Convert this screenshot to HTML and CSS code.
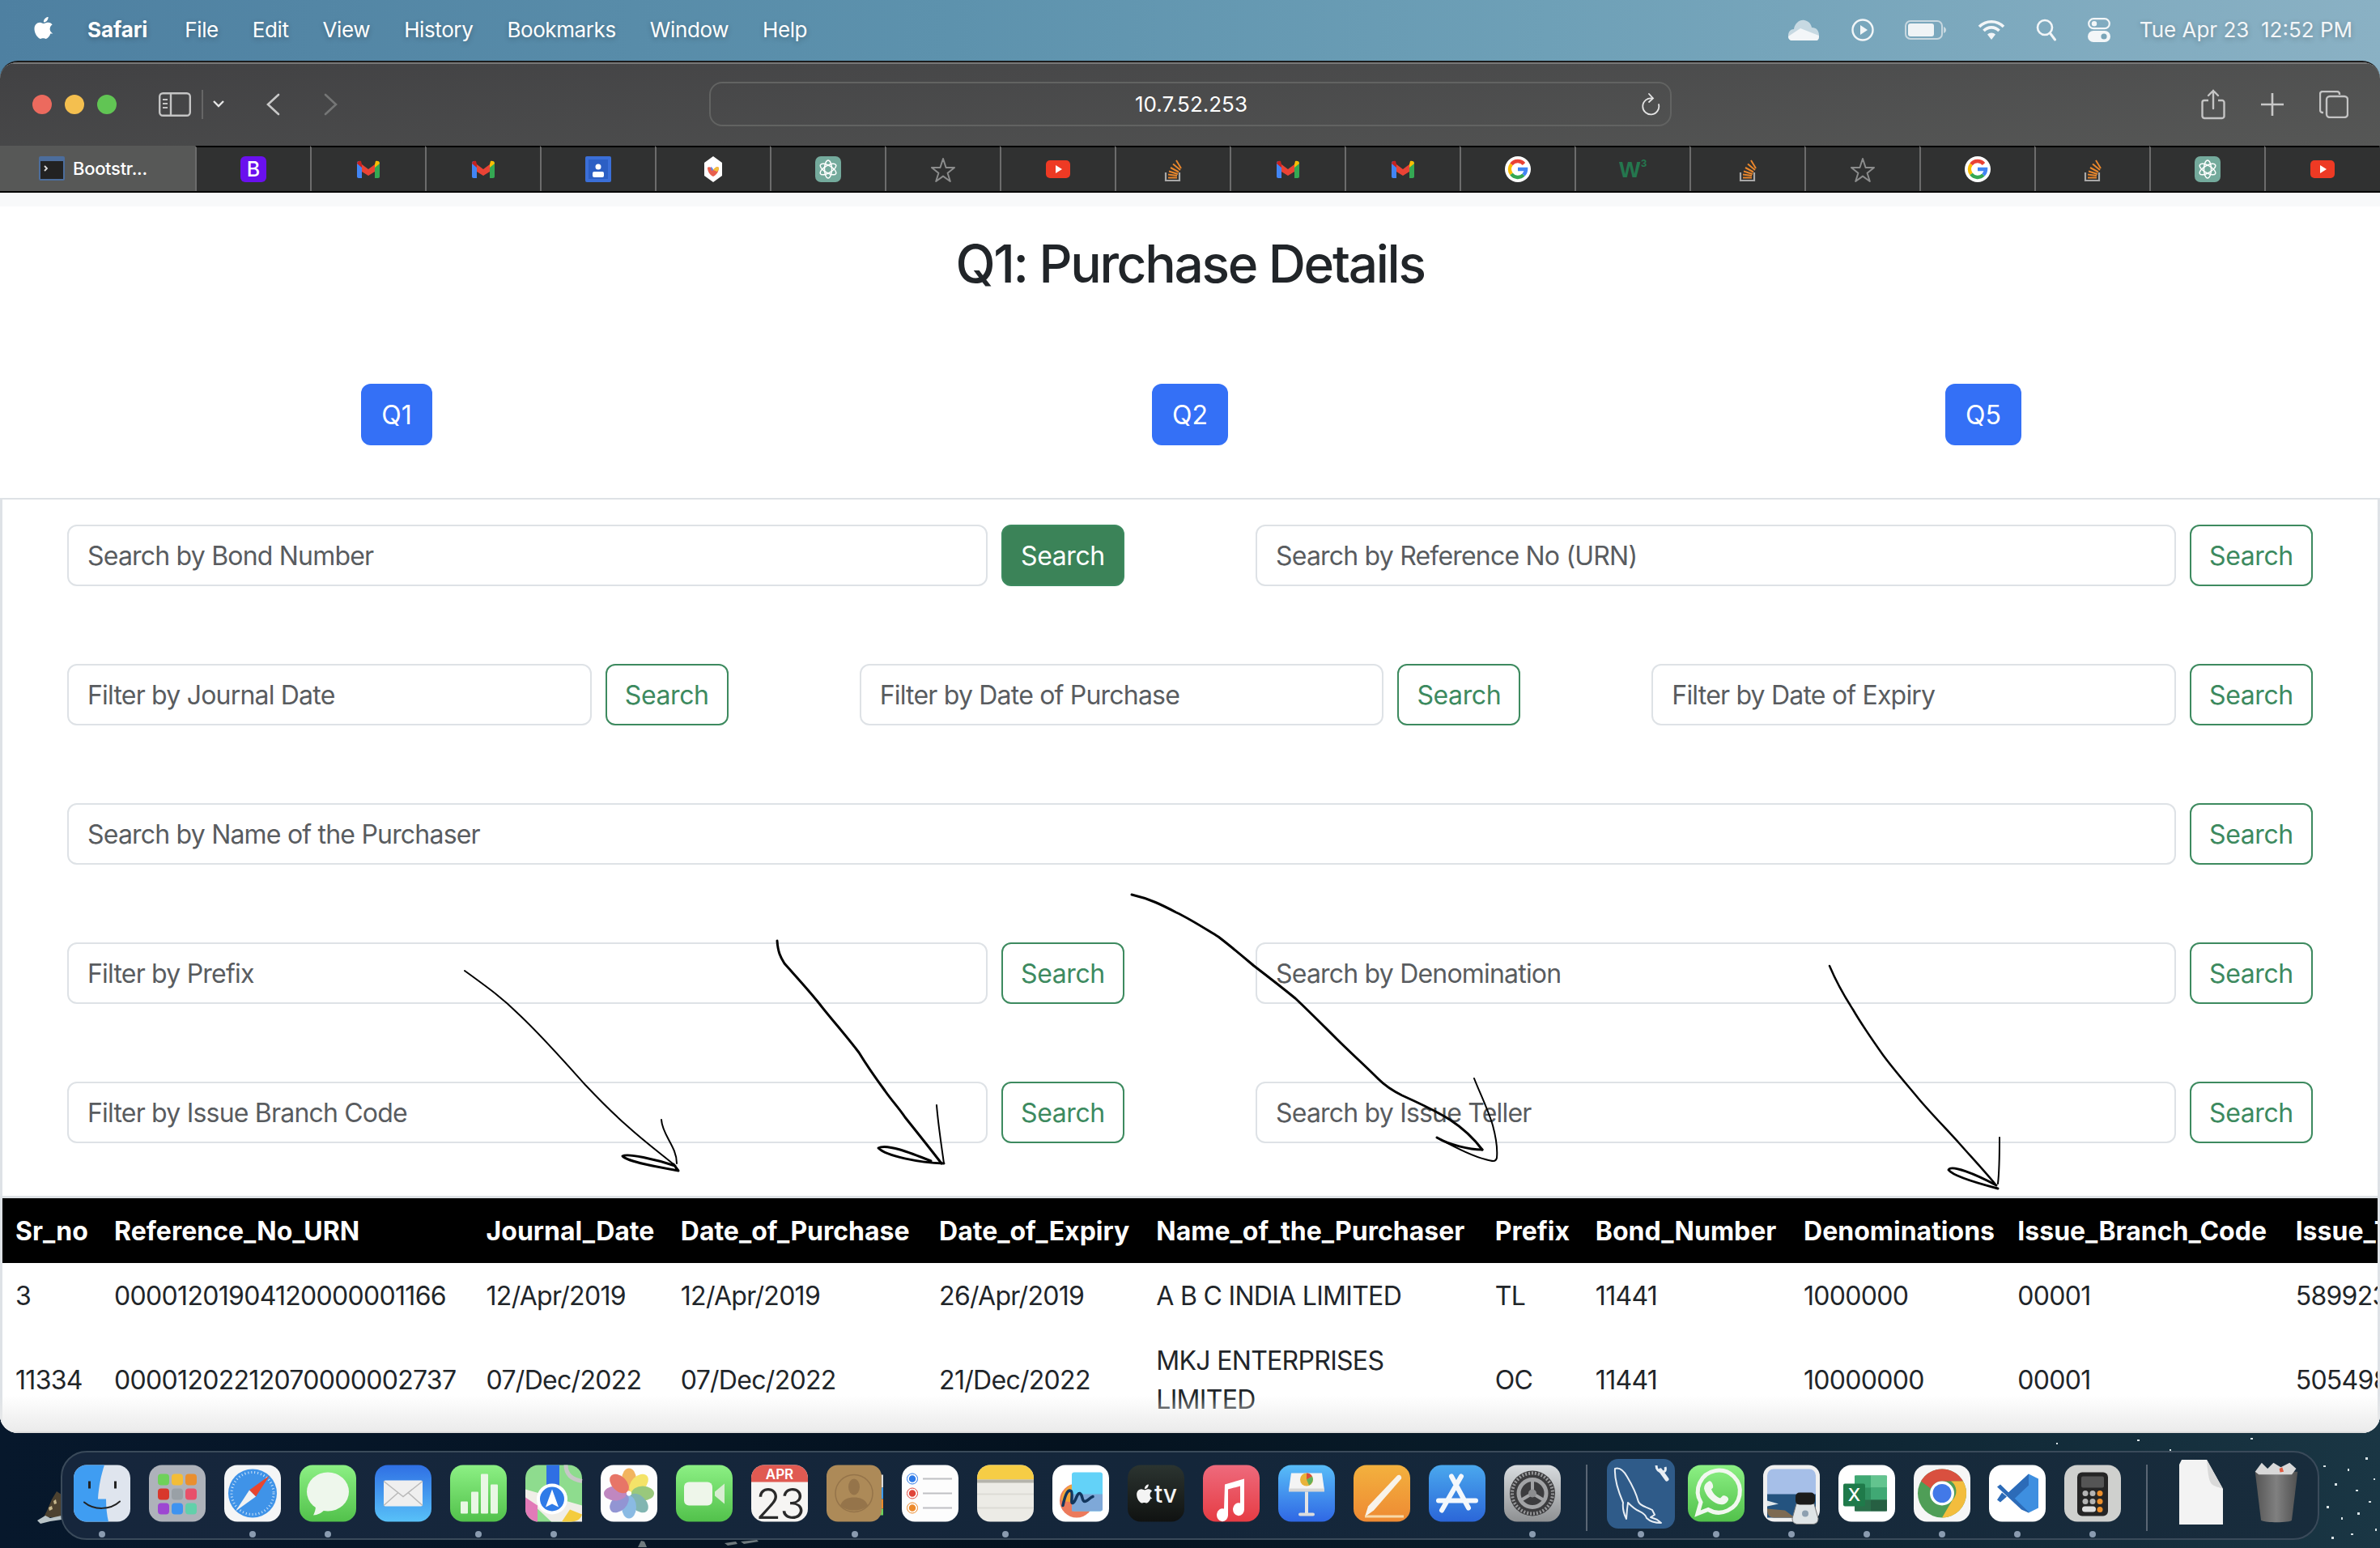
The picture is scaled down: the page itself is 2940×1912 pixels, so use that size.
FILE: index.html
```html
<!DOCTYPE html>
<html lang="en">
<head>
  <meta charset="UTF-8">
  <title>Q1: Purchase Details</title>
  <link rel="stylesheet" href="styles.css">
</head>
<body>
  <!-- shared icons -->
  <svg class="defs" width="0" height="0">
    <defs>
      <symbol id="i-apple" viewBox="0 0 16 16"><path fill="currentColor" d="M11.182.008C11.148-.03 9.923.023 8.857 1.18c-1.066 1.156-.902 2.482-.878 2.516.024.034 1.52.087 2.475-1.258.955-1.345.762-2.391.728-2.43zm3.314 11.733c-.048-.096-2.325-1.234-2.113-3.422.212-2.189 1.675-2.789 1.698-2.854.023-.065-.597-.79-1.254-1.157a3.692 3.692 0 0 0-1.563-.434c-.108-.003-.483-.095-1.254.116-.508.139-1.653.589-1.968.607-.316.018-1.256-.522-2.267-.665-.647-.09-1.333.094-1.824.28-.47.177-1.343.665-1.958 1.632-.928 1.46-.677 4.203.36 6.293.318.638.76 1.287 1.323 1.93.52.61 1.182 1.338 1.975 1.306.693-.03 1.011-.432 1.963-.432.944 0 1.198.432 2.015.418.836-.014 1.347-.748 1.87-1.347.342-.39.625-.825.823-1.22.177-.352.413-.86.467-1.025z"/></symbol>
      <symbol id="i-gmail" viewBox="0 0 32 32">
        <path fill="#4285f4" d="M2 27V9c0-2 .8-3 2-3l4 4v17H4c-1.200 0-2-.8-2-2z"/>
        <path fill="#34a853" d="M24 27V10l4-4c1.200 0 2 1 2 3v16c0 1.200-.8 2-2 2z"/>
        <path fill="#ea4335" d="M8 10v9l8 5 8-5v-9l-8 6z"/>
        <path fill="#c5221f" d="M2 9c0-3 3-4 5-3l1 4v4L2 9z"/>
        <path fill="#fbbc04" d="M30 9c0-3-3-4-5-3l-1 4v4l6-5z"/>
      </symbol>
      <symbol id="i-star" viewBox="0 0 32 32"><path fill="none" stroke="#8b8c8c" stroke-width="2" stroke-linejoin="round" d="M16 3l3.600 11h10.400l-8.400 6.800 3.200 10.200-8.800-6.400-8.800 6.400 3.200-10.200L2 14h10.400z"/></symbol>
      <symbol id="i-yt" viewBox="0 0 32 32"><rect x="1" y="5" width="30" height="22" rx="5" fill="#ee3a24"/><path fill="#fff" d="M13 11l8 5-8 5z"/></symbol>
      <symbol id="i-so" viewBox="0 0 32 32">
        <path fill="none" stroke="#a8a8a8" stroke-width="2.200" d="M7 20v10h17V20"/>
        <path fill="none" stroke="#e8862c" stroke-width="2" d="M10 26.500h11M10 22.500l11 1.500M11 18.500l11 3.500M13 14l10 5.500M16 9.500l9 7.500M20 5l6 10"/>
      </symbol>
      <symbol id="i-g" viewBox="0 0 32 32">
        <circle cx="16" cy="16" r="16" fill="#fff"/>
        <path fill="none" stroke="#ea4335" stroke-width="4.500" d="M23.500 9.500A10 10 0 0 0 8 10"/>
        <path fill="none" stroke="#fbbc04" stroke-width="4.500" d="M8 10a10 10 0 0 0 0 12"/>
        <path fill="none" stroke="#34a853" stroke-width="4.500" d="M8 22a10 10 0 0 0 15 1"/>
        <path fill="none" stroke="#4285f4" stroke-width="4.500" d="M23 23c2-2 3-4 3-7H16"/>
      </symbol>
      <symbol id="i-gpt" viewBox="0 0 32 32">
        <rect width="32" height="32" rx="7" fill="#74aa9c"/>
        <g fill="none" stroke="#fff" stroke-width="1.500">
          <ellipse cx="16" cy="16" rx="4.500" ry="11"/>
          <ellipse cx="16" cy="16" rx="4.500" ry="11" transform="rotate(60 16 16)"/>
          <ellipse cx="16" cy="16" rx="4.500" ry="11" transform="rotate(120 16 16)"/>
        </g>
      </symbol>
    </defs>
  </svg>

  <div class="screen">
    <header class="menubar">
      <svg class="menu-apple" width="28" height="32"><use href="#i-apple"/></svg>
      <nav class="menu-items">
        <span class="menu-app">Safari</span>
        <span>File</span>
        <span>Edit</span>
        <span>View</span>
        <span>History</span>
        <span>Bookmarks</span>
        <span>Window</span>
        <span>Help</span>
      </nav>
      <div class="status">
        <svg width="42" height="30" viewBox="0 0 42 30"><path fill="#c7d9e2" d="M2 22c0-5 3-8 7-8 1-7 7-12 13-11 5 1 8 4 9 9 6 0 9 4 9 10 0 4-1 6-4 6H7c-3 0-5-2-5-6z"/><path fill="#f3f6f8" d="M2 23l15-10 23 9c0 4-1 6-4 6H7c-3 0-5-2-5-5z"/></svg>
        <svg width="28" height="28" viewBox="0 0 28 28"><circle cx="14" cy="14" r="12.500" fill="none" stroke="#f2f6f8" stroke-width="2.400"/><path fill="#f2f6f8" d="M11 8l9 6-9 6z"/></svg>
        <svg width="52" height="24" viewBox="0 0 52 24"><rect x="1" y="1" width="45" height="22" rx="6" fill="none" stroke="#c8d8e0" stroke-width="2"/><rect x="4" y="4" width="32" height="16" rx="3" fill="#f0f4f6"/><path fill="#c8d8e0" d="M48 8c2 1 3 2 3 4s-1 3-3 4z"/></svg>
        <svg width="34" height="26" viewBox="0 0 34 26"><g fill="none" stroke="#f3f6f8" stroke-width="3.600"><path d="M2 9a21 21 0 0 1 30 0"/><path d="M7.500 14a13 13 0 0 1 19 0"/></g><path fill="#f3f6f8" d="M12 18.500a7 7 0 0 1 10 0L17 25z"/></svg>
        <svg width="26" height="28" viewBox="0 0 26 28"><circle cx="11" cy="11" r="9" fill="none" stroke="#f3f6f8" stroke-width="2.600"/><path stroke="#f3f6f8" stroke-width="3" stroke-linecap="round" d="M17.500 18l6 8"/></svg>
        <svg width="28" height="30" viewBox="0 0 28 30"><rect x="1.200" y="1.200" width="25.600" height="12" rx="6" fill="none" stroke="#f3f6f8" stroke-width="2.200"/><circle cx="8" cy="7.200" r="3.200" fill="#f3f6f8"/><rect y="16" width="28" height="14" rx="7" fill="#f3f6f8"/><circle cx="20" cy="23" r="3.600" fill="#7aa5b9"/></svg>
        <span class="clock">Tue Apr 23&nbsp; 12:52 PM</span>
      </div>
    </header>

    <div class="window">
      <div class="toolbar">
        <div class="tb-left">
          <span class="light red"></span>
          <span class="light yellow"></span>
          <span class="light green"></span>
          <svg class="tb-sidebar" width="40" height="30" viewBox="0 0 40 30"><rect x="1.200" y="1.200" width="37.600" height="27.600" rx="4" fill="none" stroke="#c4c4c4" stroke-width="2.400"/><path stroke="#c4c4c4" stroke-width="2.400" d="M15 2v26"/><path stroke="#c4c4c4" stroke-width="2" d="M5 9h6M5 14h6M5 19h6"/></svg>
          <span class="tb-divider"></span>
          <svg class="tb-chev" width="14" height="9" viewBox="0 0 14 9"><path fill="none" stroke="#e6e6e6" stroke-width="2.400" d="M1 1l6 6 6-6"/></svg>
          <svg class="tb-back" width="18" height="28" viewBox="0 0 18 28"><path fill="none" stroke="#c8c8c8" stroke-width="2.600" stroke-linecap="round" d="M16 2L3 14l13 12"/></svg>
          <svg class="tb-fwd" width="18" height="28" viewBox="0 0 18 28"><path fill="none" stroke="#757676" stroke-width="2.600" stroke-linecap="round" d="M2 2l13 12L2 26"/></svg>
        </div>
        <div class="urlbar">
          <span class="url-text">10.7.52.253</span>
          <svg class="url-reload" width="24" height="28" viewBox="0 0 24 28"><path fill="none" stroke="#e4e4e4" stroke-width="1.800" stroke-linecap="round" d="M14 6.500A10 10 0 1 0 22 14"/><path fill="none" stroke="#e4e4e4" stroke-width="1.800" stroke-linecap="round" d="M10 1l5 5.500-5 4.500"/></svg>
        </div>
        <div class="tb-right">
          <svg width="30" height="38" viewBox="0 0 30 38"><path fill="none" stroke="#c4c4c4" stroke-width="2.400" stroke-linecap="round" d="M15 24V2M9 8l6-6 6 6"/><path fill="none" stroke="#c4c4c4" stroke-width="2.400" d="M9 14H4a2.500 2.500 0 0 0-2.500 2.500v17A3 3 0 0 0 4 36h22a2.500 2.500 0 0 0 2.500-2.500v-17A2.500 2.500 0 0 0 26 14h-5"/></svg>
          <svg width="28" height="28" viewBox="0 0 28 28"><path stroke="#c8c8c8" stroke-width="2.600" d="M14 0v28M0 14h28"/></svg>
          <svg width="36" height="34" viewBox="0 0 36 34"><rect x="9" y="7" width="26" height="26" rx="4" fill="none" stroke="#c4c4c4" stroke-width="2.400"/><path fill="none" stroke="#c4c4c4" stroke-width="2.400" d="M5 27H4a3 3 0 0 1-3-3V4a3 3 0 0 1 3-3h18a3 3 0 0 1 3 3v1"/></svg>
        </div>
      </div>

      <div class="tabs">
        <div class="tab tab-active">
          <svg width="32" height="30" viewBox="0 0 32 30"><rect width="32" height="30" rx="2" fill="#4c6d9c"/><rect x="2" y="6" width="28" height="22" fill="#222"/><path fill="none" stroke="#ddd" stroke-width="1.800" d="M7 12l3 3-3 3"/></svg>
          <span class="tab-title">Bootstr...</span>
        </div>
        <div class="tab"><svg width="32" height="32" viewBox="0 0 32 32"><rect width="32" height="32" rx="6" fill="#6a10ee"/><text x="16" y="25" class="fav-b">B</text></svg></div>
        <div class="tab"><svg width="32" height="32"><use href="#i-gmail"/></svg></div>
        <div class="tab"><svg width="32" height="32"><use href="#i-gmail"/></svg></div>
        <div class="tab"><svg width="32" height="32" viewBox="0 0 32 32"><rect width="32" height="32" rx="2" fill="#3b6fd8"/><rect x="4" y="4" width="24" height="24" fill="#2c5fc4"/><circle cx="16" cy="13" r="3.500" fill="#fff"/><rect x="9" y="19" width="14" height="7" rx="2" fill="#fff"/></svg></div>
        <div class="tab"><svg width="32" height="32" viewBox="0 0 32 32"><path fill="#fff" d="M16 0l11 8v16l-11 8-11-8V8z"/><path fill="#e8604f" d="M9 14c2-2 5 0 7 3 2-3 5-5 7-3 0 5-3 9-7 11-4-2-7-6-7-11z"/><path fill="#f3c13a" d="M16 17c2-3 5-5 7-3 0 2-1 4-2 5z"/><path fill="#5f86e8" d="M13 13c1 0 3 2 3 4l-2 1z"/></svg></div>
        <div class="tab"><svg width="32" height="32"><use href="#i-gpt"/></svg></div>
        <div class="tab"><svg width="32" height="32"><use href="#i-star"/></svg></div>
        <div class="tab"><svg width="32" height="32"><use href="#i-yt"/></svg></div>
        <div class="tab"><svg width="32" height="32"><use href="#i-so"/></svg></div>
        <div class="tab"><svg width="32" height="32"><use href="#i-gmail"/></svg></div>
        <div class="tab"><svg width="32" height="32"><use href="#i-gmail"/></svg></div>
        <div class="tab"><svg width="32" height="32"><use href="#i-g"/></svg></div>
        <div class="tab"><svg width="34" height="32" viewBox="0 0 34 32"><text x="0" y="26" class="fav-w">W</text><text x="27" y="13" class="fav-3">3</text></svg></div>
        <div class="tab"><svg width="32" height="32"><use href="#i-so"/></svg></div>
        <div class="tab"><svg width="32" height="32"><use href="#i-star"/></svg></div>
        <div class="tab"><svg width="32" height="32"><use href="#i-g"/></svg></div>
        <div class="tab"><svg width="32" height="32"><use href="#i-so"/></svg></div>
        <div class="tab"><svg width="32" height="32"><use href="#i-gpt"/></svg></div>
        <div class="tab"><svg width="32" height="32"><use href="#i-yt"/></svg></div>
      </div>

      <main class="page">
        <h2 class="title">Q1: Purchase Details</h2>
        <div class="q-row">
          <div class="q-cell"><button class="btn-q">Q1</button></div>
          <div class="q-cell"><button class="btn-q">Q2</button></div>
          <div class="q-cell"><button class="btn-q">Q5</button></div>
        </div>

        <div class="card">
          <section class="filters">
            <div class="filter-row cols-2">
              <div class="field"><input placeholder="Search by Bond Number"><button class="btn-search active">Search</button></div>
              <div class="field"><input placeholder="Search by Reference No (URN)"><button class="btn-search">Search</button></div>
            </div>
            <div class="filter-row cols-3">
              <div class="field"><input placeholder="Filter by Journal Date"><button class="btn-search">Search</button></div>
              <div class="field"><input placeholder="Filter by Date of Purchase"><button class="btn-search">Search</button></div>
              <div class="field"><input placeholder="Filter by Date of Expiry"><button class="btn-search">Search</button></div>
            </div>
            <div class="filter-row">
              <div class="field"><input placeholder="Search by Name of the Purchaser"><button class="btn-search">Search</button></div>
            </div>
            <div class="filter-row cols-2">
              <div class="field"><input placeholder="Filter by Prefix"><button class="btn-search">Search</button></div>
              <div class="field"><input placeholder="Search by Denomination"><button class="btn-search">Search</button></div>
            </div>
            <div class="filter-row cols-2">
              <div class="field"><input placeholder="Filter by Issue Branch Code"><button class="btn-search">Search</button></div>
              <div class="field"><input placeholder="Search by Issue Teller"><button class="btn-search">Search</button></div>
            </div>
          </section>

          <table class="results">
            <colgroup>
              <col class="c-sr"><col class="c-ref"><col class="c-jd"><col class="c-dp"><col class="c-de"><col class="c-name">
              <col class="c-pre"><col class="c-bond"><col class="c-den"><col class="c-branch"><col class="c-teller">
            </colgroup>
            <thead>
              <tr>
                <th>Sr_no</th><th>Reference_No_URN</th><th>Journal_Date</th><th>Date_of_Purchase</th><th>Date_of_Expiry</th><th>Name_of_the_Purchaser</th>
                <th>Prefix</th><th>Bond_Number</th><th>Denominations</th><th>Issue_Branch_Code</th><th>Issue_Teller</th>
              </tr>
            </thead>
            <tbody>
              <tr>
                <td>3</td><td>00001201904120000001166</td><td>12/Apr/2019</td><td>12/Apr/2019</td><td>26/Apr/2019</td><td>A B C INDIA LIMITED</td>
                <td>TL</td><td>11441</td><td>1000000</td><td>00001</td><td>589923</td>
              </tr>
              <tr>
                <td>11334</td><td>00001202212070000002737</td><td>07/Dec/2022</td><td>07/Dec/2022</td><td>21/Dec/2022</td><td>MKJ ENTERPRISES LIMITED</td>
                <td>OC</td><td>11441</td><td>10000000</td><td>00001</td><td>505498</td>
              </tr>
            </tbody>
          </table>
        </div>
      </main>
    </div>

    <footer class="desktop">
      <!-- rocks and foam on the wallpaper -->
      <svg class="wallpaper" width="2940" height="142" viewBox="0 0 2940 142">
        <path fill="#4d4230" d="M58 96l6-14 6-10 6 4v28H54z"/>
        <path fill="#c9b98e" d="M60 92l4-2 1 4-4 2zM66 84l3-2 1 5-3 1z"/>
        <path fill="#b9c4c8" d="M46 108l10-6 6 3 14-3v5l-14 2-12 3z"/>
        <path fill="#6f7a7e" d="M788 141l4-8 4 1 3 7zM895 136l14-2 2 3-12 2zM915 134l20-2 2 2-18 3z"/>
        <g fill="#d9e3e6">
          <rect x="2520" y="34" width="3" height="2"/><rect x="2680" y="20" width="2" height="2"/><rect x="2870" y="40" width="3" height="2"/>
          <rect x="2884" y="62" width="3" height="3"/><rect x="2900" y="44" width="2" height="3"/><rect x="2910" y="70" width="3" height="2"/>
          <rect x="2922" y="30" width="3" height="3"/><rect x="2932" y="56" width="2" height="2"/><rect x="2874" y="90" width="3" height="3"/>
          <rect x="2892" y="104" width="2" height="3"/><rect x="2912" y="98" width="3" height="3"/><rect x="2926" y="84" width="3" height="2"/>
          <rect x="2880" y="128" width="3" height="3"/><rect x="2904" y="124" width="3" height="2"/><rect x="2934" y="118" width="2" height="3"/>
          <rect x="2540" y="12" width="2" height="2"/><rect x="2640" y="8" width="3" height="2"/><rect x="2780" y="6" width="3" height="2"/>
        </g>
      </svg>
      <div class="dock">
        <div class="dock-item on"><svg class="dock-ico" viewBox="0 0 70 70"><rect width="70" height="70" rx="16" fill="#dfe5ee"/><path fill="#3f9df2" d="M16 0h22c-4 12-7 26-8 42h10c0 10 1 20 3 28H16A16 16 0 0 1 0 54V16A16 16 0 0 1 16 0z"/><path fill="#222" d="M18 20h3v9h-3zM50 20h3v9h-3z"/><path fill="none" stroke="#222" stroke-width="2" stroke-linecap="round" d="M13 46c12 10 32 10 44-1"/></svg></div>
        <div class="dock-item"><svg class="dock-ico" viewBox="0 0 70 70"><rect width="70" height="70" rx="16" fill="#aeb2ba"/><rect x="11" y="11" width="14" height="14" rx="4" fill="#6fd15a"/><rect x="28" y="11" width="14" height="14" rx="4" fill="#f3bd38"/><rect x="45" y="11" width="14" height="14" rx="4" fill="#ea8f2f"/><rect x="11" y="29" width="14" height="14" rx="4" fill="#d8372c"/><rect x="28" y="29" width="14" height="14" rx="4" fill="#99a0a6"/><rect x="45" y="29" width="14" height="14" rx="4" fill="#e8506a"/><rect x="11" y="47" width="14" height="14" rx="4" fill="#9d47d2"/><rect x="28" y="47" width="14" height="14" rx="4" fill="#3f93f0"/><rect x="45" y="47" width="14" height="14" rx="4" fill="#62d0aa"/></svg></div>
        <div class="dock-item on"><svg class="dock-ico" viewBox="0 0 70 70"><rect width="70" height="70" rx="16" fill="#f4f5f6"/><circle cx="35" cy="35" r="30" fill="#3f93e8"/><circle cx="35" cy="35" r="26" fill="none" stroke="#cfe4f8" stroke-width="3" stroke-dasharray="1 3"/><path fill="#e8452f" d="M56 13L31 31l8 8z"/><path fill="#f2f2f2" d="M14 57l25-18-8-8z"/></svg></div>
        <div class="dock-item on"><svg class="dock-ico" viewBox="0 0 70 70"><defs><linearGradient id="g-green" x1="0" y1="0" x2="0" y2="1"><stop offset="0" stop-color="#8cf084"/><stop offset="1" stop-color="#52c14b"/></linearGradient></defs><rect width="70" height="70" rx="16" fill="url(#g-green)"/><ellipse cx="35" cy="33" rx="26" ry="24" fill="#eef7ec"/><path fill="#eef7ec" d="M20 50c0 6-2 10-3 12 5 0 11-3 14-7z"/></svg></div>
        <div class="dock-item"><svg class="dock-ico" viewBox="0 0 70 70"><defs><linearGradient id="g-mail" x1="0" y1="0" x2="0" y2="1"><stop offset="0" stop-color="#2f6fe4"/><stop offset="1" stop-color="#58c1f8"/></linearGradient></defs><rect width="70" height="70" rx="16" fill="url(#g-mail)"/><rect x="11" y="19" width="48" height="32" rx="2" fill="#efefef"/><path fill="none" stroke="#b9b9b9" stroke-width="1.500" d="M11 20l24 19 24-19M11 50l18-16M59 50L41 34"/></svg></div>
        <div class="dock-item on"><svg class="dock-ico" viewBox="0 0 70 70"><rect width="70" height="70" rx="16" fill="url(#g-green)"/><rect x="13" y="45" width="9" height="15" rx="1" fill="#e9f7e4"/><rect x="26" y="33" width="9" height="27" rx="1" fill="#e9f7e4"/><rect x="38" y="11" width="9" height="49" rx="1" fill="#e9f7e4"/><rect x="50" y="24" width="9" height="36" rx="1" fill="#e9f7e4"/></svg></div>
        <div class="dock-item on"><svg class="dock-ico" viewBox="0 0 70 70"><rect width="70" height="70" rx="16" fill="#8edc8e"/><path fill="#f0eee8" d="M0 30L70 50v20H32L0 40z"/><path fill="#e27ab8" d="M0 40l15 10v20H16A16 16 0 0 1 0 54z"/><path fill="#f4cc3e" d="M45 70l10-15 15 6c-1 5-6 9-14 9z"/><rect x="26" y="0" width="16" height="32" fill="#2f6fe4"/><path fill="none" stroke="#c7c7c7" stroke-width="5" d="M50 0c0 12 8 18 20 20"/><circle cx="33" cy="42" r="19" fill="#fff"/><circle cx="33" cy="42" r="15" fill="#2f7be8"/><path fill="#fff" d="M33 30l8 22-8-4-8 4z"/></svg></div>
        <div class="dock-item"><svg class="dock-ico" viewBox="0 0 70 70"><rect width="70" height="70" rx="16" fill="#fdfdfd"/><g opacity=".78"><ellipse cx="35" cy="18" rx="9" ry="14" fill="#f0a033"/><ellipse cx="35" cy="18" rx="9" ry="14" fill="#f2dc3f" transform="rotate(45 35 35)"/><ellipse cx="35" cy="18" rx="9" ry="14" fill="#7eba58" transform="rotate(90 35 35)"/><ellipse cx="35" cy="18" rx="9" ry="14" fill="#5fa29c" transform="rotate(135 35 35)"/><ellipse cx="35" cy="18" rx="9" ry="14" fill="#6aa8dc" transform="rotate(180 35 35)"/><ellipse cx="35" cy="18" rx="9" ry="14" fill="#7578c8" transform="rotate(225 35 35)"/><ellipse cx="35" cy="18" rx="9" ry="14" fill="#b066b0" transform="rotate(270 35 35)"/><ellipse cx="35" cy="18" rx="9" ry="14" fill="#e2503e" transform="rotate(315 35 35)"/></g></svg></div>
        <div class="dock-item"><svg class="dock-ico" viewBox="0 0 70 70"><rect width="70" height="70" rx="16" fill="url(#g-green)"/><rect x="10" y="21" width="35" height="29" rx="6" fill="#eef6ea"/><path fill="#d8edd2" d="M48 33l12-10v25L48 38z"/></svg></div>
        <div class="dock-item"><svg class="dock-ico" viewBox="0 0 70 70"><rect width="70" height="70" rx="16" fill="#f6f5f3"/><path fill="#e05a52" d="M0 21V16A16 16 0 0 1 16 0h38a16 16 0 0 1 16 16v5z"/><text x="35" y="17" class="cal-month">APR</text><text x="35" y="66" class="cal-day">23</text></svg></div>
        <div class="dock-item on"><svg class="dock-ico" viewBox="0 0 70 70"><rect x="66" y="12" width="4" height="16" fill="#ddd"/><rect x="66" y="28" width="4" height="14" fill="#3f9df2"/><rect x="66" y="42" width="4" height="12" fill="#ec8a2b"/><rect x="66" y="54" width="4" height="8" fill="#6bd25c"/><rect width="68" height="70" rx="14" fill="#ad8a58"/><circle cx="34" cy="35" r="23" fill="none" stroke="#95744a" stroke-width="1.500"/><ellipse cx="34" cy="27" rx="7" ry="10" fill="#95744a"/><path fill="#95744a" d="M17 50c3-8 10-10 17-10s14 2 17 10c-8 8-26 8-34 0z"/></svg></div>
        <div class="dock-item"><svg class="dock-ico" viewBox="0 0 70 70"><rect width="70" height="70" rx="16" fill="#fdfdfd"/><circle cx="13" cy="17" r="5" fill="#2f7be8" stroke="#fff" stroke-width="1.500"/><circle cx="13" cy="17" r="6.500" fill="none" stroke="#2f7be8"/><circle cx="13" cy="35" r="5" fill="#e0453a" stroke="#fff" stroke-width="1.500"/><circle cx="13" cy="35" r="6.500" fill="none" stroke="#e0453a"/><circle cx="13" cy="53" r="5" fill="#ec8a2b" stroke="#fff" stroke-width="1.500"/><circle cx="13" cy="53" r="6.500" fill="none" stroke="#ec8a2b"/><path stroke="#bfc0c4" stroke-width="2" d="M26 17h36M26 35h36M26 53h36"/></svg></div>
        <div class="dock-item on"><svg class="dock-ico" viewBox="0 0 70 70"><rect width="70" height="70" rx="16" fill="#ecebe6"/><path fill="#f6cd45" d="M0 18V16A16 16 0 0 1 16 0h38a16 16 0 0 1 16 16v2z"/><rect y="18" width="70" height="4" fill="#b5b4ac"/><path stroke="#dcdbd5" stroke-width="2" d="M0 36h70M0 53h70"/></svg></div>
        <div class="dock-item"><svg class="dock-ico" viewBox="0 0 70 70"><rect width="70" height="70" rx="16" fill="#fff"/><circle cx="30" cy="44" r="21" fill="#ec7a5c"/><path fill="#f3a53a" d="M11 44a21 21 0 0 1 18-21l1 24z"/><rect x="24" y="9" width="38" height="48" rx="3" fill="#63d2f8"/><path fill="#7ea8d8" d="M24 36h38v18a3 3 0 0 1-3 3H24z"/><path fill="none" stroke="#12365e" stroke-width="3.500" stroke-linecap="round" d="M13 50c3-14 6-20 10-18 3 2-1 16 2 15 4-1 5-13 9-12 4 2 2 10 6 10 4 0 6-5 10-6"/></svg></div>
        <div class="dock-item"><svg class="dock-ico" viewBox="0 0 70 70"><defs><linearGradient id="g-tv" x1="0" y1="0" x2="0" y2="1"><stop offset="0" stop-color="#2b3430"/><stop offset="1" stop-color="#101211"/></linearGradient></defs><rect width="70" height="70" rx="16" fill="url(#g-tv)"/><svg x="9" y="22" width="24" height="28" color="#f4f4f4"><use href="#i-apple"/></svg><text x="33" y="46" class="tv-text">tv</text></svg></div>
        <div class="dock-item"><svg class="dock-ico" viewBox="0 0 70 70"><defs><linearGradient id="g-music" x1="0" y1="0" x2="0" y2="1"><stop offset="0" stop-color="#ee6a7c"/><stop offset="1" stop-color="#e63c44"/></linearGradient></defs><rect width="70" height="70" rx="16" fill="url(#g-music)"/><path fill="#fff" d="M27 24l24-7v37a7 8 0 1 1-5-7V26l-15 4v31a7 8 0 1 1-5-7z"/></svg></div>
        <div class="dock-item"><svg class="dock-ico" viewBox="0 0 70 70"><defs><linearGradient id="g-key" x1="0" y1="0" x2="0" y2="1"><stop offset="0" stop-color="#58bdf8"/><stop offset="1" stop-color="#2f67e4"/></linearGradient></defs><rect width="70" height="70" rx="16" fill="url(#g-key)"/><path fill="#f4f4f4" d="M16 10h38l3 21H13z"/><rect x="13" y="29" width="44" height="4" fill="#d6d6d6"/><circle cx="35" cy="18" r="8" fill="#e8b33a"/><path fill="#d8503c" d="M35 18V10a8 8 0 0 1 7 4z"/><path fill="#62b05a" d="M35 18l7-4a8 8 0 0 1-4 11z"/><rect x="33" y="33" width="4" height="28" fill="#e4e4e4"/><rect x="25" y="59" width="20" height="4" rx="2" fill="#dcdcdc"/></svg></div>
        <div class="dock-item"><svg class="dock-ico" viewBox="0 0 70 70"><defs><linearGradient id="g-pages" x1="0" y1="0" x2="0" y2="1"><stop offset="0" stop-color="#f3b13e"/><stop offset="1" stop-color="#ee8a33"/></linearGradient></defs><rect width="70" height="70" rx="16" fill="url(#g-pages)"/><path fill="#f8f3ea" d="M54 13c3-2 6 1 5 4L25 56l-11 8 4-13z"/><rect x="14" y="62" width="48" height="3" fill="#f8d9a8"/></svg></div>
        <div class="dock-item"><svg class="dock-ico" viewBox="0 0 70 70"><defs><linearGradient id="g-store" x1="0" y1="0" x2="0" y2="1"><stop offset="0" stop-color="#4aa8ee"/><stop offset="1" stop-color="#2b66d8"/></linearGradient></defs><rect width="70" height="70" rx="16" fill="url(#g-store)"/><path fill="none" stroke="#f4f8fc" stroke-width="6" stroke-linecap="round" d="M28 14l21 39M40 14L16 56M12 44h46"/></svg></div>
        <div class="dock-item on"><svg class="dock-ico" viewBox="0 0 70 70"><defs><linearGradient id="g-set" x1="0" y1="0" x2="0" y2="1"><stop offset="0" stop-color="#d8dcdf"/><stop offset="1" stop-color="#8e9092"/></linearGradient></defs><rect width="70" height="70" rx="16" fill="url(#g-set)"/><circle cx="35" cy="35" r="28" fill="#3c3c3e"/><circle cx="35" cy="35" r="25" fill="none" stroke="#98999b" stroke-width="4" stroke-dasharray="2 2"/><circle cx="35" cy="35" r="17" fill="none" stroke="#a2a3a5" stroke-width="5"/><path stroke="#a2a3a5" stroke-width="4" d="M35 35V18M35 35l15 9M35 35l-15 9"/><circle cx="35" cy="35" r="5" fill="#8c8d8f"/></svg></div>
        <span class="dock-sep"></span>
        <div class="dock-item on"><svg class="dock-ico wide" viewBox="0 0 84 86"><rect width="84" height="86" rx="14" fill="#2f5b89"/><path fill="none" stroke="#e8eef4" stroke-width="2" stroke-linejoin="round" d="M10 12c6-2 11 3 15 10 6 10 11 20 14 31 3 6 10 6 17 10l3 6-5 3 8 3 5 4c-8 0-14-2-18-6-1-5-6-7-10-9-5-2-9-6-13-10l-1 8-1 12c-3-6-5-12-4-20C14 40 9 26 10 12z"/><path stroke="#e8eef4" stroke-width="5" stroke-linecap="round" d="M66 14l8 11"/><path fill="none" stroke="#e8eef4" stroke-width="3" d="M61 8c0 5 3 8 8 8s3-6 3-6"/></svg></div>
        <div class="dock-item on"><svg class="dock-ico" viewBox="0 0 70 70"><rect width="70" height="70" rx="16" fill="url(#g-green)"/><path fill="none" stroke="#f2f8f0" stroke-width="5" d="M12 60l4-14a26 26 0 1 1 9 9z"/><path fill="#f2f8f0" d="M26 20c3-2 6 5 5 8l-2 2c2 5 6 9 11 11l3-3c3-1 8 2 7 5-2 5-7 7-13 5-8-3-15-10-17-19 0-4 2-7 6-9z"/></svg></div>
        <div class="dock-item on"><svg class="dock-ico" viewBox="0 0 70 70"><rect width="70" height="70" rx="14" fill="#f0f0f0"/><rect x="5" y="5" width="60" height="60" rx="8" fill="#a6bfe8"/><path fill="#24537f" d="M5 36h60v29H5z"/><path fill="#dfe6ea" d="M5 44l14 4-14 3z"/><path fill="#7d6a52" d="M5 54l22 2 12 9H13a8 8 0 0 1-8-8z"/><path fill="#dfe4e6" stroke="#777" d="M41 48h22l5 18c0 5-3 7-7 7H43c-4 0-7-2-7-7z"/><rect x="40" y="34" width="24" height="15" rx="5" fill="#1c1c1c"/><circle cx="52" cy="60" r="4" fill="#8ea0b0"/></svg></div>
        <div class="dock-item on"><svg class="dock-ico" viewBox="0 0 70 70"><rect width="70" height="70" rx="16" fill="#fff"/><rect x="20" y="13" width="40" height="44" rx="2" fill="#2f8f5f"/><rect x="40" y="13" width="20" height="15" fill="#63c48f"/><rect x="20" y="13" width="20" height="15" fill="#3fa873"/><rect x="40" y="28" width="20" height="15" fill="#40a874"/><rect x="40" y="43" width="20" height="14" fill="#265f42"/><rect x="20" y="43" width="20" height="14" fill="#2a6f4a"/><rect x="6" y="23" width="27" height="28" rx="2" fill="#1f7a4a"/><text x="19.500" y="44" class="xl-x">X</text></svg></div>
        <div class="dock-item on"><svg class="dock-ico" viewBox="0 0 70 70"><rect width="70" height="70" rx="16" fill="#f6f6f6"/><circle cx="35" cy="35" r="30" fill="#4f9e57"/><path fill="#d9503f" d="M9 20a30 30 0 0 1 52 0H35a15 15 0 0 0-14 9z"/><path fill="#f3bd3d" d="M61 20a30 30 0 0 1-26 45l13-22a15 15 0 0 0-2-23z"/><circle cx="35" cy="35" r="15" fill="#fff"/><circle cx="35" cy="35" r="11.500" fill="#4279e8"/></svg></div>
        <div class="dock-item on"><svg class="dock-ico" viewBox="0 0 70 70"><rect width="70" height="70" rx="16" fill="#fff"/><path fill="#3e8fe0" d="M49 11l12 6v36l-12 6L23 35z"/><path fill="#2c6bb8" d="M49 11v14L31 42l-8-7zM10 27l4-3 35 34v1l-9-4zM10 43l4 3 8-7-6-5z"/></svg></div>
        <div class="dock-item on"><svg class="dock-ico" viewBox="0 0 70 70"><rect width="70" height="70" rx="16" fill="#cfd0ce"/><rect x="16" y="9" width="38" height="54" rx="6" fill="#252525"/><rect x="21" y="14" width="28" height="14" rx="2" fill="#555"/><g fill="#b4b4b4"><circle cx="26" cy="35" r="3.500"/><circle cx="35" cy="35" r="3.500"/><circle cx="26" cy="45" r="3.500"/><circle cx="35" cy="45" r="3.500"/><rect x="22" y="51" width="17" height="7" rx="3.500" fill="#ddd"/></g><g fill="#ec8f2c"><circle cx="44" cy="35" r="3.500"/><circle cx="44" cy="45" r="3.500"/><circle cx="44" cy="55" r="3.500"/></g></svg></div>
        <span class="dock-sep"></span>
        <div class="dock-item"><svg class="dock-ico tall" viewBox="0 0 54 80"><path fill="#f3f3f3" d="M3 0h31l20 36v44H0V6z"/><path fill="#d9d9d9" d="M34 0c1 12 2 26 6 30 3 3 10 4 14 6L34 0z"/></svg></div>
        <div class="dock-item"><svg class="dock-ico tall" viewBox="0 0 64 84"><defs><linearGradient id="g-bin" x1="0" y1="0" x2="1" y2="0"><stop offset="0" stop-color="#555"/><stop offset=".5" stop-color="#808080"/><stop offset="1" stop-color="#505050"/></linearGradient></defs><path fill="url(#g-bin)" d="M3 14h58l-8 66c-1 4-40 4-42 0z"/><path fill="#d8d8d8" d="M3 14l9-12 8 8 8-8 10 6 12-6 9 8-6 8H8z"/><path fill="#e05a40" d="M36 10l4-2 2 6-5 1z"/></svg></div>
      </div>
    </footer>

    <!-- hand-drawn arrows on top of the shot -->
    <svg class="scribbles" width="2940" height="1912" viewBox="0 0 2940 1912">
      <g fill="none" stroke="#000" stroke-linecap="round" stroke-linejoin="round">
        <path stroke-width="2" d="M574 1199C600 1218 620 1232 640 1252C668 1278 696 1310 723 1340C742 1360 758 1376 774 1390C796 1410 815 1424 832 1438"/>
        <path stroke-width="2" d="M817 1383C818 1402 836 1416 836 1437"/>
        <path stroke-width="3" d="M832 1438L838 1446C815 1442 775 1435 769 1428C775 1424 810 1432 834 1440"/>

        <path stroke-width="3" d="M960 1162C961 1176 964 1182 969 1190C985 1208 998 1222 1010 1237C1028 1260 1046 1280 1061 1300C1072 1318 1082 1332 1093 1347C1102 1360 1110 1368 1118 1380C1134 1400 1150 1420 1163 1437"/>
        <path stroke-width="2" d="M1157 1365C1159 1390 1163 1415 1166 1437"/>
        <path stroke-width="3" d="M1166 1437C1135 1436 1095 1428 1085 1418C1095 1412 1125 1424 1150 1434"/>

        <path stroke-width="3" d="M1398 1105C1420 1110 1436 1118 1453 1127C1472 1136 1490 1148 1505 1157C1522 1170 1536 1182 1549 1193C1566 1206 1584 1220 1600 1233C1618 1250 1634 1266 1651 1283C1668 1300 1686 1316 1703 1333C1712 1342 1722 1348 1732 1353C1752 1362 1774 1372 1791 1383C1808 1394 1822 1408 1831 1420"/>
        <path stroke-width="3" d="M1831 1420C1815 1420 1790 1414 1775 1405"/>
        <path stroke-width="2" d="M1775 1405C1795 1416 1818 1428 1835 1432C1842 1434 1848 1436 1849 1430C1850 1420 1848 1405 1844 1390C1838 1370 1828 1350 1821 1332"/>

        <path stroke-width="2.500" d="M2260 1193C2268 1212 2278 1230 2289 1247C2300 1266 2314 1286 2326 1303C2340 1322 2356 1340 2370 1357C2386 1376 2404 1394 2421 1413C2436 1430 2452 1447 2465 1463"/>
        <path stroke-width="2" d="M2470 1405C2470 1425 2470 1445 2468 1462"/>
        <path stroke-width="3" d="M2468 1468C2445 1462 2412 1452 2407 1445C2410 1438 2440 1450 2466 1464"/>
      </g>
    </svg>
  </div>
</body>
</html>
```

FILE: styles.css
```css
* {
  box-sizing: border-box;
}
html, body {
  margin: 0;
  padding: 0;
}
body {
  font-family: Inter, 'Noto Sans', sans-serif;
  color: #212529;
}
.defs {
  position: absolute;
}

/* the whole desktop */
.screen {
  position: relative;
  width: 2940px;
  height: 1912px;
  overflow: hidden;
  display: flex;
  flex-direction: column;
  background:
    linear-gradient(90deg, #4e80a1 0%, #5d92ad 40%, #6ea0b7 65%, #8ab1c4 100%) no-repeat 0 0 / 100% 110px,
    linear-gradient(90deg, #07182c 0%, #04121f 45%, #0c2331 75%, #1a3644 100%);
}

/* menu bar */
.menubar {
  height: 75px;
  flex: none;
  display: flex;
  align-items: center;
  padding: 0 34px 2px 40px;
  color: #fff;
  font-size: 26px;
  text-shadow: 0 2px 6px rgba(0,0,0,0.25);
}
.menu-apple {
  color: #fff;
  margin-top: -4px;
}
.menu-items {
  display: flex;
  gap: 42px;
  margin-left: 40px;
  letter-spacing: -0.4px;
}
.menu-app {
  font-weight: 700;
  letter-spacing: -0.1px;
  margin-right: 4px;
}
.status {
  margin-left: auto;
  display: flex;
  align-items: center;
  gap: 38px;
}
.clock {
  color: #f3f6f8;
  white-space: nowrap;
  margin-left: -2px;
}

/* browser window */
.window {
  position: relative;
  flex: none;
  height: 1695px;
  display: flex;
  flex-direction: column;
  overflow: hidden;
  border-radius: 22px;
  background: #fff;
  border-top: 2px solid #1c1c1c;
}
.toolbar {
  height: 103px;
  flex: none;
  display: flex;
  align-items: center;
  padding-right: 39px;
  background: linear-gradient(175deg, #414143 0%, #565756 100%);
  box-shadow: inset 0 2px 0 #777;
}
.tb-left {
  width: 876px;
  flex: none;
  display: flex;
  align-items: center;
  padding-left: 40px;
}
.light {
  width: 24px;
  height: 24px;
  border-radius: 50%;
  margin-right: 16px;
}
.red { background: #ec6a5e; }
.yellow { background: #f4bf4f; }
.green { background: #61c554; }
.tb-sidebar {
  margin-left: 36px;
}
.tb-divider {
  width: 2px;
  height: 36px;
  background: #666;
  margin-left: 13px;
}
.tb-chev {
  margin-left: 12px;
}
.tb-back {
  margin-left: 51px;
}
.tb-fwd {
  margin-left: 54px;
}
.urlbar {
  width: 1189px;
  height: 55px;
  flex: none;
  position: relative;
  display: flex;
  align-items: center;
  justify-content: center;
  border: 2px solid #626362;
  border-radius: 16px;
  color: #fff;
  font-size: 26px;
}
.url-text {
  margin-left: 2px;
}
.url-reload {
  position: absolute;
  right: 12px;
  top: 12px;
}
.tb-right {
  margin-left: auto;
  display: flex;
  align-items: center;
  gap: 44px;
}

/* tab strip */
.tabs {
  height: 58px;
  flex: none;
  display: flex;
  background: #303131;
  border-bottom: 2px solid #000;
}
.tab {
  width: 142px;
  flex: none;
  display: flex;
  align-items: center;
  justify-content: center;
  border-top: 2px solid #000;
  border-left: 2px solid #6c6c6c;
}
.tab-active {
  width: 241px;
  justify-content: flex-start;
  gap: 10px;
  padding-left: 48px;
  border: none;
  background: #575857;
  color: #fff;
  font-size: 22px;
}
.tab-title {
  font-weight: 500;
  white-space: nowrap;
  letter-spacing: -0.3px;
}
.fav-b {
  font: 500 25px Inter, sans-serif;
  fill: #fff;
  text-anchor: middle;
}
.fav-w {
  font: 800 28px 'Liberation Sans', sans-serif;
  fill: #24774e;
}
.fav-3 {
  font: 700 13px 'Liberation Sans', sans-serif;
  fill: #24774e;
}

/* page content */
.page {
  position: relative;
  flex: 1;
  min-height: 0;
  display: flex;
  flex-direction: column;
  overflow: hidden;
  background: linear-gradient(#f8f9fa 17px, #fff 17px);
}
.page::after {
  content: "";
  position: absolute;
  left: 0;
  right: 0;
  bottom: 0;
  height: 46px;
  background: linear-gradient(rgba(232,232,232,0), #ebebeb 94%, #d6d6d6);
  pointer-events: none;
}
.title {
  margin: 0;
  padding-top: 49px;
  font-size: 64px;
  font-weight: 500;
  line-height: 77px;
  text-align: center;
  letter-spacing: -2.3px;
}
.q-row {
  display: grid;
  grid-template-columns: repeat(3, 1fr);
  margin-top: 110px;
}
.q-cell {
  display: flex;
  justify-content: center;
}
.btn-q {
  height: 76px;
  padding: 0 25px;
  border: none;
  border-radius: 12px;
  background: #3470f6;
  color: #fff;
  font: 400 32px Inter, sans-serif;
}
.card {
  flex: 1;
  min-height: 0;
  margin-top: 65px;
  overflow: hidden;
  border-top: 2px solid #dee2e6;
  border-left: 3px solid #dee2e6;
  border-right: 3px solid #dee2e6;
}
.filters {
  padding: 31px 80px 65px;
  display: flex;
  flex-direction: column;
  gap: 96px;
  border-bottom: 3px solid #dee2e6;
}
.filter-row {
  display: grid;
  column-gap: 162px;
}
.cols-2 {
  grid-template-columns: repeat(2, 1fr);
}
.cols-3 {
  grid-template-columns: repeat(3, 1fr);
}
.field {
  display: flex;
  gap: 17px;
}
.field input {
  flex: 1;
  min-width: 0;
  height: 76px;
  padding: 0 23px;
  border: 2px solid #dee2e6;
  border-radius: 12px;
  font: 400 32px Inter, sans-serif;
  letter-spacing: -0.8px;
  color: #212529;
  background: #fff;
}
.field input::placeholder {
  color: #595c5f;
  opacity: 1;
}
.btn-search {
  width: 152px;
  height: 76px;
  flex: none;
  padding: 0;
  border: 2px solid #3d8a5f;
  border-radius: 12px;
  background: #fff;
  color: #3d8a5f;
  font: 400 32px Inter, sans-serif;
  letter-spacing: -0.4px;
}
.btn-search.active {
  background: #3b8358;
  color: #fff;
}

/* results table */
.results {
  table-layout: fixed;
  width: 3119px;
  border-collapse: collapse;
  font-size: 32px;
  line-height: 48px;
}
.c-sr { width: 122px; }
.c-ref { width: 459px; }
.c-jd { width: 240px; }
.c-dp { width: 319px; }
.c-de { width: 268px; }
.c-name { width: 418px; }
.c-pre { width: 124px; }
.c-bond { width: 257px; }
.c-den { width: 264px; }
.c-branch { width: 343px; }
.c-teller { width: 302px; }
.results th,
.results td {
  padding: 17px 16px 15px;
  text-align: left;
  vertical-align: middle;
}
.results td {
  letter-spacing: -0.7px;
}
.results th {
  background: #000;
  color: #fff;
  font-weight: 700;
  white-space: nowrap;
}

/* desktop and dock */
.desktop {
  position: relative;
  flex: 1;
  padding: 22px 0 0 75px;
}
.wallpaper {
  position: absolute;
  left: 0;
  top: 0;
}
.dock {
  position: relative;
  width: 2790px;
  height: 110px;
  display: flex;
  gap: 23px;
  padding: 15px 0 0 14px;
  border: 2px solid #3a4a5a;
  border-radius: 32px;
  background: linear-gradient(90deg, #16263c 0%, #14263a 50%, #182c3c 100%);
}
.dock-item {
  position: relative;
  width: 70px;
  height: 70px;
  flex: none;
  display: flex;
  justify-content: center;
}
.dock-ico {
  flex: none;
  width: 70px;
  height: 71px;
  overflow: visible;
}
.dock-ico.wide {
  width: 84px;
  height: 86px;
  margin-top: -7px;
}
.dock-ico.tall {
  width: 58px;
  height: 80px;
  margin-top: -6px;
}
.dock-item.on::after {
  content: "";
  position: absolute;
  left: 31px;
  top: 82px;
  width: 8px;
  height: 8px;
  border-radius: 50%;
  background: #8a9bb0;
}
.dock-sep {
  width: 2px;
  height: 82px;
  flex: none;
  margin: 0 8px;
  background: #5a6674;
}
.cal-month {
  font: 600 17px Inter, sans-serif;
  fill: #fff;
  text-anchor: middle;
}
.cal-day {
  font: 300 52px Inter, sans-serif;
  letter-spacing: -2px;
  fill: #2a2a2a;
  text-anchor: middle;
}
.tv-text {
  font: 500 30px Inter, sans-serif;
  fill: #f4f4f4;
}
.xl-x {
  font: 500 22px Inter, sans-serif;
  fill: #fff;
  text-anchor: middle;
}

/* arrows drawn on the screenshot */
.scribbles {
  position: absolute;
  left: 0;
  top: 0;
  pointer-events: none;
}
```
